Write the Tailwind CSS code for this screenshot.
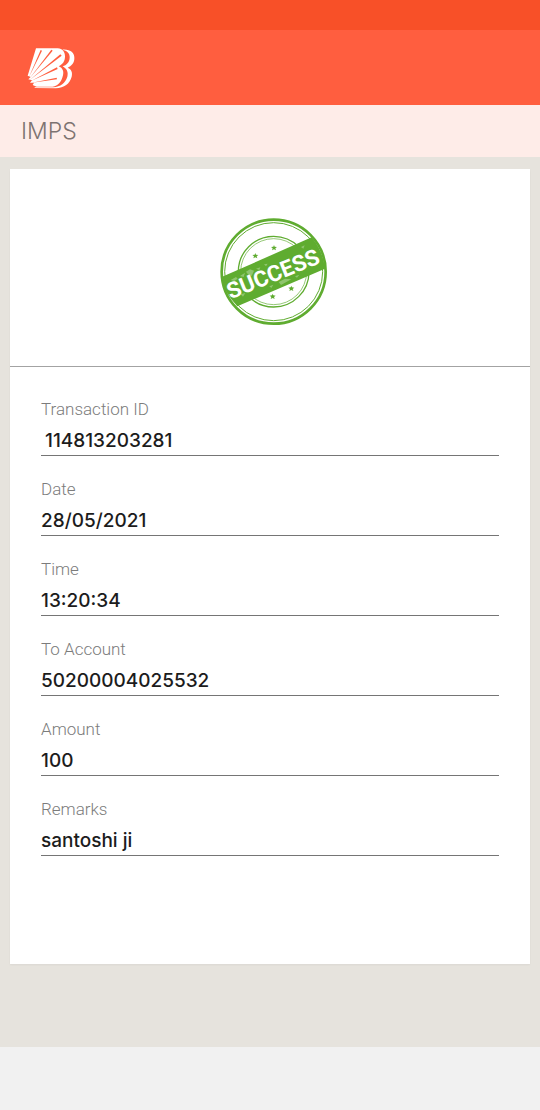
<!DOCTYPE html>
<html lang="en">
<head>
  <meta charset="UTF-8" />
  <meta name="viewport" content="width=device-width, initial-scale=1.0" />
  <title>IMPS</title>
  <script src="https://cdn.jsdelivr.net/npm/@tailwindcss/browser@4"></script>
</head>
<body class="min-h-screen flex flex-col bg-[#e6e3dd] font-['Inter',sans-serif]">
  <!-- Status bar and header -->
  <div class="h-[30px] bg-[#f85028]"></div>
  <header class="h-[75px] px-[27px] flex items-center bg-[#ff5e3f]">
    <svg class="w-12 h-[42px]" viewBox="51 51 144 126" role="img" aria-label="Bank logo">
      <path fill="#fff" d="M78 55H143C158 56 165 66 165 79C165 94 158 103 146 109C158 114 162 124 159 136C154 157 144 168 128 170H80L68 165L72 158L60 158L66 151L55 148L62 141L53 137Z" />
      <path fill="#fff" d="M157 59C181 57 195 69 193 87C192 100 184 108 173 113C185 118 188 128 185 140C179 162 163 173 137 175L74 174V172L130 172C152 170 166 159 172 140C176 126 170 116 158 109C170 105 178 97 179 83C180 70 171 62 157 59Z" />
      <g fill="#ff5e3f">
        <path d="M56 143L92 60L96 62Z" />
        <path d="M58 146L124 59L128 62Z" />
        <path d="M60 149L151 73L155 77Z" />
        <path d="M63 153L141 112L143 117Z" />
        <path d="M66 158L140 143L141 148Z" />
      </g>
    </svg>
  </header>
  <div class="h-[52px] px-[21px] flex items-center bg-[#feece8]">
    <h1 class="text-[23px] leading-7 font-light text-[#7d7371]">IMPS</h1>
  </div>

  <!-- Receipt -->
  <main class="flex-1 px-[10px] pt-3 pb-[83px] flex flex-col">
    <section class="flex-1 bg-white shadow-xs">
      <div class="h-[198px] pt-[49px] pl-[7px] flex justify-center border-b border-[#a3a3a3]">
        <svg class="w-[108px] h-[108px]" viewBox="30 30 324 324" role="img" aria-label="Success">
          <g fill="none" stroke="#5fac30">
            <circle cx="191" cy="191" r="156" stroke-width="8" />
            <circle cx="191" cy="191" r="147" stroke-width="3" />
            <circle cx="191" cy="191" r="106" stroke-width="4" />
            <circle cx="191" cy="191" r="99" stroke-width="2" />
          </g>
          <g fill="#5fac30">
            <path id="star" d="M136 135L138 140L145 141L140 145L142 151L136 148L130 151L132 145L127 141L134 140Z" />
            <use href="#star" x="56" y="-24" />
            <use href="#star" x="52" y="122" />
            <use href="#star" x="108" y="98" />
            <path d="M33 208L305 88Q340 130 345 182L82 295Q43 255 33 208Z" />
          </g>
          <g fill="#fff" fill-opacity=".3">
            <path d="M62 216L78 207L83 212L73 219ZM90 204L105 194L101 207ZM108 191L120 184L132 188L125 204L115 200ZM138 182L151 178L148 186ZM162 169L173 167L168 175ZM206 222L225 212L244 214L229 222L213 231ZM178 235L190 230L184 240ZM92 259L106 255L99 266ZM273 117L284 112L280 122ZM255 205L268 200L261 209Z" />
          </g>
          <text x="189" y="221" transform="rotate(-22 189 198)" text-anchor="middle" fill="#fff" font-family="Roboto, sans-serif" font-size="67" font-weight="700">SUCCESS</text>
        </svg>
      </div>

      <form class="px-[31px] pt-[30px] pb-[107px]">
        <div class="h-20">
          <label for="txn" class="block text-[17px] leading-6 font-['Roboto',sans-serif] font-light text-[#7c7c7c]">Transaction ID</label>
          <input id="txn" value="114813203281" readonly class="block w-full h-[35px] pt-1 pl-1 border-b border-[#757575] text-[19px] leading-6 font-medium text-[#1c1c1c] outline-none" />
        </div>
        <div class="h-20">
          <label for="date" class="block text-[17px] leading-6 font-['Roboto',sans-serif] font-light text-[#7c7c7c]">Date</label>
          <input id="date" value="28/05/2021" readonly class="block w-full h-[35px] pt-1 border-b border-[#757575] text-[19px] leading-6 font-medium text-[#1c1c1c] outline-none" />
        </div>
        <div class="h-20">
          <label for="time" class="block text-[17px] leading-6 font-['Roboto',sans-serif] font-light text-[#7c7c7c]">Time</label>
          <input id="time" value="13:20:34" readonly class="block w-full h-[35px] pt-1 border-b border-[#757575] text-[19px] leading-6 font-medium text-[#1c1c1c] outline-none" />
        </div>
        <div class="h-20">
          <label for="account" class="block text-[17px] leading-6 font-['Roboto',sans-serif] font-light text-[#7c7c7c]">To Account</label>
          <input id="account" value="50200004025532" readonly class="block w-full h-[35px] pt-1 border-b border-[#757575] text-[19px] leading-6 font-medium text-[#1c1c1c] outline-none" />
        </div>
        <div class="h-20">
          <label for="amount" class="block text-[17px] leading-6 font-['Roboto',sans-serif] font-light text-[#7c7c7c]">Amount</label>
          <input id="amount" value="100" readonly class="block w-full h-[35px] pt-1 border-b border-[#757575] text-[19px] leading-6 font-medium text-[#1c1c1c] outline-none" />
        </div>
        <div>
          <label for="remarks" class="block text-[17px] leading-6 font-['Roboto',sans-serif] font-light text-[#7c7c7c]">Remarks</label>
          <input id="remarks" value="santoshi ji" readonly class="block w-full h-[35px] pt-1 border-b border-[#757575] text-[19px] leading-6 font-medium text-[#1c1c1c] outline-none" />
        </div>
      </form>
    </section>
  </main>
  <footer class="h-[63px] bg-[#f1f1f1]"></footer>
</body>
</html>
